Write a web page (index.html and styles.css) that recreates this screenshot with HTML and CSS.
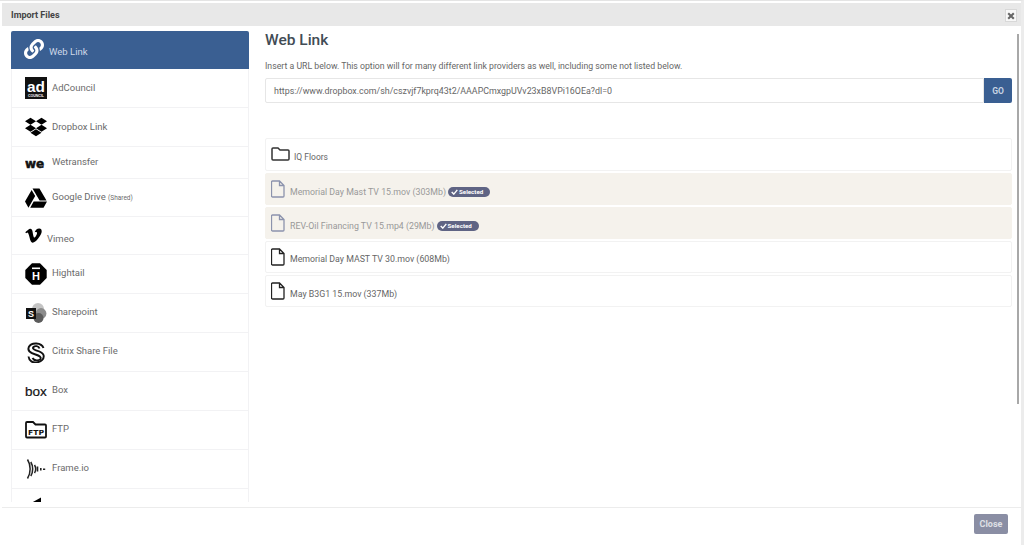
FILE: index.html
```html
<!DOCTYPE html>
<html lang="en">
<head>
<meta charset="utf-8">
<title>Import Files</title>
<link rel="stylesheet" href="styles.css">
</head>
<body>
<div class="modal">
  <header class="modal-head">
    <span class="modal-title">Import Files</span>
    <button class="x-btn" aria-label="Close"><svg viewBox="0 0 10 10" width="8" height="8"><path d="M1.500 1.500l7 7M8.500 1.500l-7 7" stroke="#666" stroke-width="2.600"/></svg></button>
  </header>
  <div class="modal-body">
    <nav class="side">
      <a class="item active">
        <svg class="ic-link" viewBox="0 0 512 512"><path fill="#fff" d="M326.612 185.391c59.747 59.809 58.927 155.698.36 214.59-.11.12-.24.25-.36.37l-67.2 67.2c-59.27 59.27-155.699 59.262-214.96 0-59.27-59.26-59.27-155.7 0-214.96l37.106-37.106c9.84-9.84 26.786-3.3 27.294 10.606.648 17.722 3.826 35.527 9.69 52.721 1.986 5.822.567 12.262-3.783 16.612l-13.087 13.087c-28.026 28.026-28.905 73.66-1.155 101.96 28.024 28.579 74.086 28.749 102.325.51l67.2-67.19c28.191-28.191 28.073-73.757 0-101.83-3.701-3.694-7.429-6.564-10.341-8.569a16.037 16.037 0 0 1-6.947-12.606c-.396-10.567 3.348-21.456 11.698-29.806l21.054-21.055c5.521-5.521 14.182-6.199 20.584-1.731a152.482 152.482 0 0 1 20.522 17.197zM467.547 44.449c-59.261-59.262-155.69-59.27-214.96 0l-67.2 67.2c-.12.12-.25.25-.36.37-58.566 58.892-59.387 154.781.36 214.59a152.454 152.454 0 0 0 20.521 17.196c6.402 4.468 15.064 3.789 20.584-1.731l21.054-21.055c8.35-8.35 12.094-19.239 11.698-29.806a16.037 16.037 0 0 0-6.947-12.606c-2.912-2.005-6.64-4.875-10.341-8.569-28.073-28.073-28.191-73.639 0-101.83l67.2-67.19c28.239-28.239 74.3-28.069 102.325.51 27.75 28.3 26.872 73.934-1.155 101.96l-13.087 13.087c-4.35 4.35-5.769 10.79-3.783 16.612 5.864 17.194 9.042 34.999 9.69 52.721.509 13.906 17.454 20.446 27.294 10.606l37.106-37.106c59.271-59.259 59.271-155.699.001-214.959z"/></svg>
        <span class="lbl-active">Web Link</span>
      </a>
      <a class="item">
        <svg class="ic" viewBox="0 0 22 22"><rect width="22" height="22" fill="#111"/><text x="11" y="15" text-anchor="middle" class="t-ad" textLength="18" lengthAdjust="spacingAndGlyphs">ad</text><text x="11" y="20" text-anchor="middle" class="t-council">COUNCIL</text></svg>
        <span>AdCouncil</span>
      </a>
      <a class="item">
        <svg class="ic" viewBox="0 0 528 512"><path d="M264.4 116.3l-132 84.3 132 84.3-132 84.3L0 284.1l132.3-84.3L0 116.3 132.3 32l132.1 84.3zM131.6 395.7l132-84.3 132 84.3-132 84.3-132-84.3zm132.8-111.6l132-84.3-132-83.6L395.7 32 528 116.3l-132.3 84.3L528 284.8l-132.3 84.3-131.3-85z"/></svg>
        <span>Dropbox Link</span>
      </a>
      <a class="item short">
        <svg class="ic-we" viewBox="0 0 22 20"><text x="0" y="14.500" class="t-we">we</text></svg>
        <span>Wetransfer</span>
      </a>
      <a class="item h38">
        <svg class="ic" viewBox="0 0 512 512"><path d="M339 314.9L175.4 32h161.2l163.6 282.9H339zm-137.5 23.6L120.9 480h310.5L512 338.5H201.5zM154.1 67.4L0 338.5 80.6 480 237 208.8 154.1 67.4z"/></svg>
        <span>Google Drive <small>(Shared)</small></span>
      </a>
      <a class="item h38 vimeo">
        <svg class="ic-vimeo" viewBox="0 50 448 410"><path d="M447.8 153.6c-2 43.6-32.4 103.3-91.4 179.1-60.9 79.2-112.4 118.8-154.6 118.8-26.1 0-48.2-24.1-66.3-72.3C100.3 250 85.3 174.3 56.2 174.3c-3.4 0-15.1 7.1-35.2 21.1L0 168.2c51.6-45.3 100.9-95.7 131.8-98.5 34.9-3.4 56.3 20.5 64.4 71.5 28.7 181.5 41.4 208.9 93.6 126.7 18.7-29.6 28.8-52.1 30.2-67.6 4.8-45.9-35.8-42.8-63.3-31 22-72.1 64.1-107.1 126.2-105.1 45.8 1.2 67.5 31.1 64.9 89.4z"/></svg>
        <span>Vimeo</span>
      </a>
      <a class="item lift">
        <svg class="ic" viewBox="0 0 22 22"><path d="M7 .3h8l6.700 6.700v8L15 21.700H7L.3 15V7z"/><rect x="7" y="4.500" width="8" height="1.600" fill="#fff"/><text x="11" y="17" text-anchor="middle" class="t-h">H</text></svg>
        <span>Hightail</span>
      </a>
      <a class="item lift">
        <svg class="ic" viewBox="0 0 22 22"><circle cx="13" cy="7" r="6" fill="#c4c4c4"/><circle cx="16" cy="11.500" r="5.400" fill="#8c8c8c"/><circle cx="13.500" cy="16" r="5" fill="#5c5c5c"/><rect x="1" y="6" width="10" height="11" fill="#111"/><text x="6" y="15" text-anchor="middle" class="t-s">S</text></svg>
        <span>Sharepoint</span>
      </a>
      <a class="item lift">
        <svg class="ic" viewBox="0 0 22 22" fill="none" stroke="#111" stroke-width="1.900"><path d="M18.500 7C16.500 1.500 6.500 .8 3.800 6C2.300 9.500 5 12 10.500 13.500C14.500 14.700 16.500 16 15.500 18C14 20 9 20 7.500 17"/><path d="M3.500 15.500C4 20 8 22 11.500 21.400C16.500 21 19.500 17.500 18.500 14C17.500 11 13.500 10.200 10.500 9.200C8 8.300 7.500 7 8.500 6C10 4.500 13.500 4.800 14.500 7.500"/></svg>
        <span>Citrix Share File</span>
      </a>
      <a class="item lift">
        <svg class="ic-box" viewBox="0 0 22 18"><text x="0" y="14" class="t-box">box</text></svg>
        <span>Box</span>
      </a>
      <a class="item lift">
        <svg class="ic" viewBox="0 0 22 18" fill="none"><path d="M1 15.500V2a1 1 0 0 1 1-1h6l2.500 2.500H20a1 1 0 0 1 1 1v11a1 1 0 0 1-1 1H2a1 1 0 0 1-1-1z" stroke="#111" stroke-width="1.800"/><text x="11" y="13.500" text-anchor="middle" class="t-ftp" textLength="16" lengthAdjust="spacingAndGlyphs">FTP</text></svg>
        <span>FTP</span>
      </a>
      <a class="item lift">
        <svg class="ic" viewBox="0 0 22 22" fill="none" stroke="#222"><path stroke-width="1.500" d="M2.500 1.500c3.500 5.500 3.500 13.500 0 19M5.800 4c2.500 4 2.500 10 0 14M9.500 7c1.500 2.500 1.500 5.500 0 8"/><path stroke-width="1.600" d="M12.500 8.500v5M15.800 10v2.500M18 11.200h2.200"/></svg>
        <span>Frame.io</span>
      </a>
      <a class="item">
        <svg class="ic" viewBox="0 0 22 22"><path d="M7 5.500L16 .5V6H7z"/></svg>
      </a>
    </nav>
    <main class="main">
      <h1 class="main-title">Web Link</h1>
      <p class="hint">Insert a URL below. This option will for many different link providers as well, including some not listed below.</p>
      <div class="url-row">
        <div class="url">https://www.dropbox.com/sh/cszvjf7kprq43t2/AAAPCmxgpUVv23xB8VPi16OEa?dl=0</div>
        <button class="go">GO</button>
      </div>
      <ul class="files">
        <li class="file">
          <svg class="ic-folder" viewBox="0 0 19 14" fill="none"><path d="M1 12V2a1 1 0 0 1 1-1h5l2 2h8a1 1 0 0 1 1 1v8a1 1 0 0 1-1 1H2a1 1 0 0 1-1-1z" stroke="#333" stroke-width="1.500"/></svg>
          <span class="folder-name">IQ Floors</span>
        </li>
        <li class="file sel">
          <svg class="ic-file" viewBox="0 0 14 18" fill="none"><path d="M1.500 1h7l4.500 4.500V16a1 1 0 0 1-1 1H1.500a1 1 0 0 1-1-1V2a1 1 0 0 1 1-1zM8.500 1v4.500H13" stroke="currentColor" stroke-width="1.300"/></svg>
          <span class="name">Memorial Day Mast TV 15.mov (303Mb)</span>
          <span class="badge"><svg viewBox="0 0 10 8" width="7" height="6" fill="none"><path d="M1 4l3 3 5-6" stroke="#fff" stroke-width="2"/></svg>Selected</span>
        </li>
        <li class="file sel">
          <svg class="ic-file" viewBox="0 0 14 18" fill="none"><path d="M1.500 1h7l4.500 4.500V16a1 1 0 0 1-1 1H1.500a1 1 0 0 1-1-1V2a1 1 0 0 1 1-1zM8.500 1v4.500H13" stroke="currentColor" stroke-width="1.300"/></svg>
          <span class="name">REV-Oil Financing TV 15.mp4 (29Mb)</span>
          <span class="badge"><svg viewBox="0 0 10 8" width="7" height="6" fill="none"><path d="M1 4l3 3 5-6" stroke="#fff" stroke-width="2"/></svg>Selected</span>
        </li>
        <li class="file">
          <svg class="ic-file" viewBox="0 0 14 18" fill="none"><path d="M1.500 1h7l4.500 4.500V16a1 1 0 0 1-1 1H1.500a1 1 0 0 1-1-1V2a1 1 0 0 1 1-1zM8.500 1v4.500H13" stroke="#222" stroke-width="1.300"/></svg>
          <span class="name">Memorial Day MAST TV 30.mov (608Mb)</span>
        </li>
        <li class="file">
          <svg class="ic-file" viewBox="0 0 14 18" fill="none"><path d="M1.500 1h7l4.500 4.500V16a1 1 0 0 1-1 1H1.500a1 1 0 0 1-1-1V2a1 1 0 0 1 1-1zM8.500 1v4.500H13" stroke="#222" stroke-width="1.300"/></svg>
          <span class="name">May B3G1 15.mov (337Mb)</span>
        </li>
      </ul>
    </main>
    <div class="thumb"></div>
  </div>
  <footer class="modal-foot"><button class="close">Close</button></footer>
</div>
</body>
</html>
```
FILE: styles.css
```css
* { box-sizing: border-box; }
html, body { margin: 0; height: 100%; overflow: hidden; }
body { background: #fff; font-family: Roboto, "Liberation Sans", sans-serif; color: #666; font-size: 9px; }
.modal { height: 545px; width: 1024px; padding: 2px 0 0 2px; border-right: 3px solid #ececec; display: flex; flex-direction: column; border-top: 1px solid #e4e4e4; }
.modal-head { height: 23px; flex: none; background: #e8e8e8; display: flex; align-items: center; justify-content: space-between; padding: 0 4px 0 9px; }
.modal-title { font-size: 9px; font-weight: 700; color: #444; }
.x-btn { width: 12px; height: 13px; padding: 0; border: 1px solid #d8d8d8; background: #f8f8f8; display: flex; align-items: center; justify-content: center; margin: 2px 0 0; }
.modal-body { flex: 1; min-height: 0; display: flex; position: relative; padding: 5px 0 5px 9px; align-items: flex-start; }
.side { width: 238px; height: 471px; flex: none; overflow: hidden; display: flex; flex-direction: column; }
.item { flex: none; display: flex; align-items: center; gap: 5px; height: 39px; padding-left: 13px; border: 1px solid #f2f2f4; border-width: 0 1px 1px; font-size: 9.500px; color: #6b6b6b; }
.item > span { margin-top: -2px; }
.item.lift > span { margin-top: -4px; }
.item small { font-size: 6.500px; }
.item.short { height: 32px; }
.item.h38 { height: 38px; }
.item.active { height: 38px; background: #3a5f92; border: 0; border-radius: 2px 2px 0 0; color: #cfd9e8; }
.item > .lbl-active { margin-top: 3px; }
.ic { width: 22px; height: 22px; flex: none; }
.ic-link { width: 20px; height: 20px; flex: none; margin-top: -3px; }
.ic-we { width: 22px; height: 20px; flex: none; }
.ic-box { width: 22px; height: 18px; flex: none; }
.ic-vimeo { width: 17px; height: 15px; flex: none; }
.item.vimeo > span { margin-top: 6px; }
.t-ad { font: 700 14px "Liberation Sans", sans-serif; fill: #fff; }
.t-council { font: 700 3.500px "Liberation Sans", sans-serif; fill: #fff; }
.t-we { font: 700 12px "DejaVu Sans", sans-serif; fill: #111; stroke: #111; stroke-width: .5px; }
.t-h { font: 700 11px "Liberation Sans", sans-serif; fill: #fff; }
.t-s { font: 700 9px "Liberation Sans", sans-serif; fill: #fff; }
.t-box { font: 400 13.500px "Liberation Sans", sans-serif; fill: #111; stroke: #111; stroke-width: .2px; }
.t-ftp { font: 700 7px "DejaVu Sans", sans-serif; fill: #111; }
.main { width: 747px; margin-left: 16px; flex: none; }
.main-title { margin: 1px 0 0; font-size: 15.500px; font-weight: 500; color: #424c55; line-height: 17px; }
.hint { margin: 12px 0 0; font-size: 8.720px; line-height: 11px; color: #666; }
.url-row { display: flex; margin-top: 6px; height: 25px; }
.url { flex: 1; border: 1px solid #e6e6e6; border-radius: 2px 0 0 2px; padding-left: 8px; display: flex; align-items: center; font-size: 8.870px; color: #666; }
.go { width: 28px; border: 0; border-radius: 0 2px 2px 0; background: #3a5f92; color: #c8d3e3; font: 700 8.500px Roboto, sans-serif; padding: 0; }
.files { list-style: none; margin: 35px 0 0; padding: 0; display: flex; flex-direction: column; gap: 2px; }
.file { height: 32px; display: flex; align-items: center; border: 1px solid #f2f2f2; border-radius: 2px; padding-left: 5px; font-size: 8.800px; color: #666; }
.file:first-child { height: 33px; }
.file.sel { background: #f5f2ec; border-color: #f5f2ec; color: #999; }
.ic-file { width: 14px; height: 18px; flex: none; margin-right: 5px; }
.sel .ic-file { color: #8c93ad; }
.ic-folder { width: 19px; height: 14px; flex: none; margin: -1px 4px 0 0; }
.name { margin-top: 6px; }
.file:nth-child(4) .name { margin-top: 4px; }
.folder-name { font-size: 8.500px; margin-top: 5px; }
.badge { margin: 6px 0 0 2px; width: 42px; height: 10px; padding-left: 3px; border-radius: 5px; background: #5f6484; color: #fff; font-size: 6.200px; font-weight: 700; display: inline-flex; align-items: center; gap: 1px; }
.thumb { position: absolute; left: 1015px; top: 8px; width: 2px; height: 370px; background: #a8a8a8; }
.modal-foot { flex: none; height: 38px; border-top: 1px solid #ececec; display: flex; justify-content: flex-end; align-items: flex-start; padding: 6px 13px 0 0; }
.close { width: 34px; height: 20px; border: 0; border-radius: 2px; background: #8a8ea4; color: #dfe0e6; font: 700 9px Roboto, sans-serif; padding: 0; }
```
